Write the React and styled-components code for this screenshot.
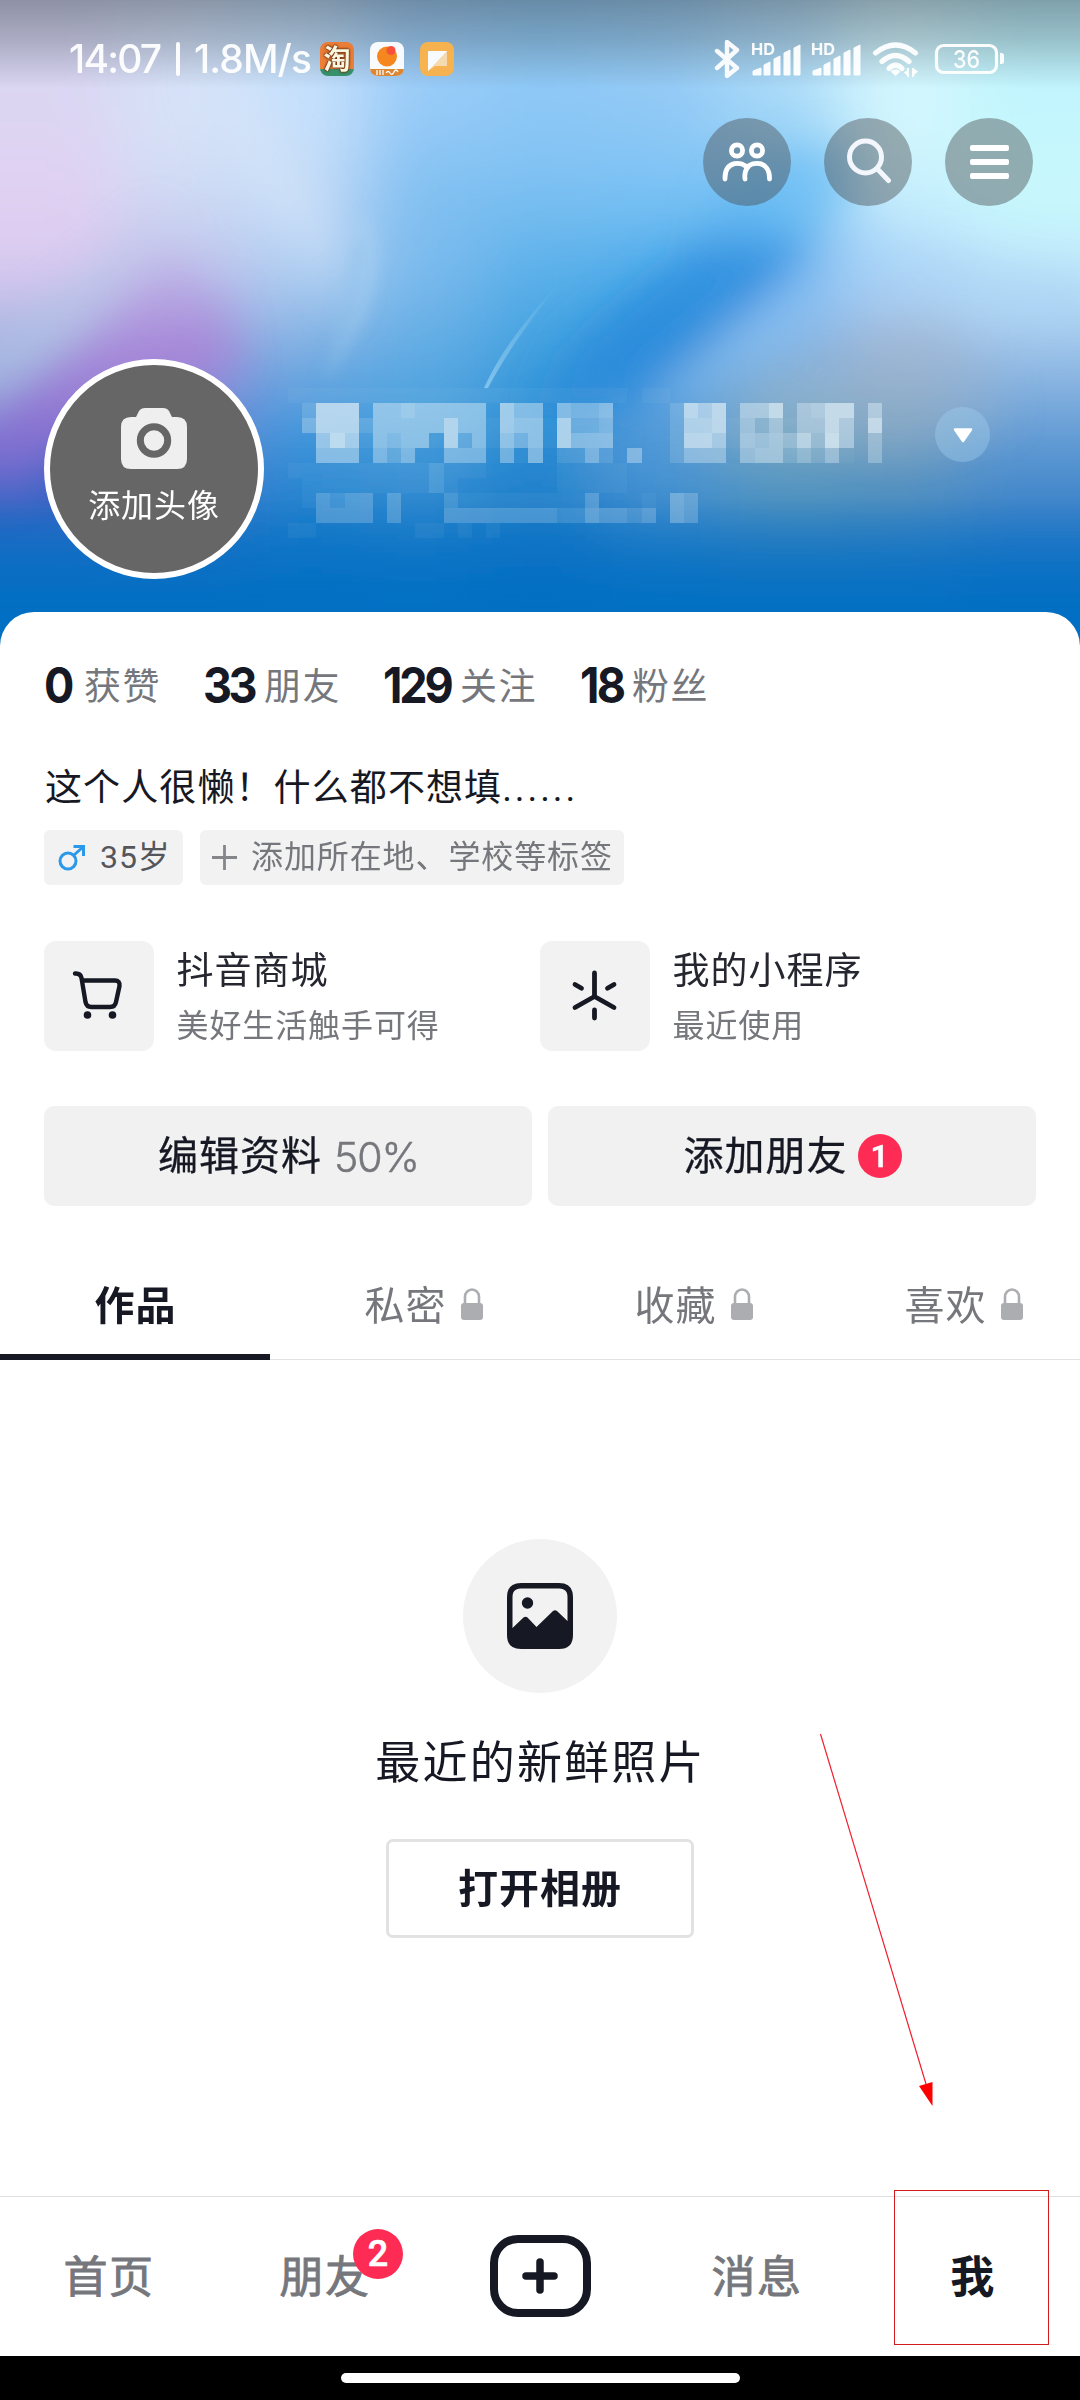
import React from "react";
import styled, { createGlobalStyle } from "styled-components";

const INK = "#161823";
const GREY = "#76777c";
const FILL = "#f2f2f2";
const RED = "#fe2c55";

const GlobalStyle = createGlobalStyle`
  * { box-sizing: border-box; }
  body {
    margin: 0;
    background: #fff;
    font-family: Roboto, "Noto Sans CJK SC", sans-serif;
    color: ${INK};
  }
  svg { display: block; flex: none; }
`;

const Screen = styled.div`
  position: relative;
  width: 1080px;
  height: 2400px;
  overflow: hidden;
  display: flex;
  flex-direction: column;
  background: #fff;
`;

/* ---------- cover ---------- */

const Cover = styled.header`
  position: relative;
  height: 612px;
  flex: none;
  display: flex;
  flex-direction: column;
`;

const Wallpaper = styled.svg`
  position: absolute;
  left: 0;
  top: 0;
`;

const StatusBar = styled.div`
  position: relative;
  height: 118px;
  padding: 40px 76px 0 69px;
  display: flex;
  justify-content: space-between;
  align-items: flex-start;
  color: #fff;
  opacity: 0.94;
`;

const StatusGroup = styled.div`
  display: flex;
  align-items: center;
  height: 38px;
`;

const Clock = styled.span`
  font: 500 39px/38px Inter, sans-serif;
  letter-spacing: ${(p) => p.$spacing}px;
  width: ${(p) => p.$width}px;
  white-space: nowrap;
`;

const Bar = styled.span`
  width: 4px;
  height: 34px;
  border-radius: 2px;
  background: #fff;
  margin: 0 14px 0 14px;
`;

const AppIcons = styled.div`
  display: flex;
  gap: 16px;
  margin-left: 8px;
`;

const TaoIcon = styled.span`
  width: 34px;
  height: 34px;
  border-radius: 8px;
  background: linear-gradient(#f0792c 0 78%, #2f8d63 78%);
  color: #fffbe0;
  font: 700 27px/32px "Noto Sans CJK SC", sans-serif;
  text-align: center;
  text-shadow: 0 0 2px #6b2a08, 0 0 2px #6b2a08, 0 0 3px #6b2a08;
`;

const Actions = styled.nav`
  position: relative;
  display: flex;
  justify-content: flex-end;
  gap: 33px;
  padding-right: 47px;
`;

const RoundButton = styled.button`
  width: 88px;
  height: 88px;
  padding: 0;
  border: 0;
  border-radius: 50%;
  background: rgba(72, 74, 76, 0.43);
  display: flex;
  align-items: center;
  justify-content: center;
`;

const Identity = styled.div`
  position: relative;
  display: flex;
  align-items: flex-start;
  padding: 0 90px 0 44px;
  margin-top: 153px;
`;

const Avatar = styled.div`
  width: 220px;
  height: 220px;
  border: 6px solid #fff;
  border-radius: 50%;
  background: #666;
  color: #fff;
  display: flex;
  flex-direction: column;
  align-items: center;
  padding-top: 43px;
  font-size: 32px;
  line-height: 44px;
  letter-spacing: 0.9px;
`;

const AvatarLabel = styled.span`
  margin-top: 15px;
`;

const HiddenName = styled.svg`
  margin: 29px 0 0 24px;
`;

const Toggle = styled.button`
  width: 55px;
  height: 55px;
  margin: 48px 0 0 auto;
  padding: 2px 0 0;
  border: 0;
  border-radius: 50%;
  background: rgba(160, 205, 235, 0.42);
  display: flex;
  align-items: center;
  justify-content: center;
`;

/* ---------- sheet ---------- */

const Sheet = styled.main`
  position: relative;
  flex: 1;
  background: #fff;
  border-radius: 34px 34px 0 0;
  display: flex;
  flex-direction: column;
`;

const Stats = styled.div`
  display: flex;
  height: 60px;
  margin: 43px 0 0 44px;
`;

const Stat = styled.div`
  display: flex;
  width: ${(p) => p.$width}px;
  color: ${GREY};
  font-size: 37px;
  line-height: 65px;
  letter-spacing: 1.4px;
  white-space: nowrap;
`;

const Count = styled.b`
  width: ${(p) => p.$width}px;
  flex: none;
  color: ${INK};
  font: 700 50px/61px Inter, sans-serif;
  letter-spacing: ${(p) => p.$spacing}px;
`;

const Narrow = styled.span`
  display: inline-block;
  transform: scaleX(0.9);
  transform-origin: left;
`;

const Bio = styled.p`
  margin: 47px 0 0 45px;
  font-size: 37px;
  line-height: 54px;
  letter-spacing: 1.1px;
`;

const Dots = styled.span`
  letter-spacing: 2.9px;
`;

const Chips = styled.div`
  display: flex;
  gap: 17px;
  margin: 14px 0 0 44px;
`;

const Chip = styled.div`
  height: 55px;
  width: ${(p) => p.$width}px;
  padding-left: ${(p) => p.$pad}px;
  border-radius: 6px;
  background: ${FILL};
  display: flex;
  align-items: center;
  gap: ${(p) => p.$gap}px;
  color: ${(p) => p.$color};
  font-size: 32px;
  line-height: 59px;
  letter-spacing: 0.9px;
  white-space: nowrap;
`;

const Shortcuts = styled.div`
  display: grid;
  grid-template-columns: 496px 496px;
  margin: 56px 0 0 44px;
`;

const Shortcut = styled.div`
  display: flex;
  gap: 22.5px;
`;

const Tile = styled.div`
  width: 110px;
  height: 110px;
  border-radius: 12px;
  background: ${FILL};
`;

const ShortcutText = styled.div`
  display: flex;
  flex-direction: column;
  padding-top: 4px;
`;

const ShortcutTitle = styled.span`
  font-size: 37px;
  line-height: 54px;
  letter-spacing: 1px;
  color: #25262f;
`;

const ShortcutNote = styled.span`
  margin-top: 2px;
  font-size: 32px;
  line-height: 50px;
  letter-spacing: 0.9px;
  color: ${GREY};
`;

const ButtonRow = styled.div`
  display: grid;
  grid-template-columns: 1fr 1fr;
  gap: 16px;
  margin: 55px 44px 0;
`;

const WideButton = styled.button`
  height: 100px;
  padding: 2px 0 0 1px;
  border: 0;
  border-radius: 10px;
  background: #f1f1f1;
  display: flex;
  align-items: center;
  justify-content: center;
  font: 400 40px/60px Roboto, "Noto Sans CJK SC", sans-serif;
  letter-spacing: 1px;
  color: ${INK};
  -webkit-text-stroke: 0.3px ${INK};
`;

const Percent = styled.span`
  margin-left: 12px;
  font-family: Inter, sans-serif;
  font-weight: 300;
  font-size: 41px;
  letter-spacing: -1px;
  color: ${GREY};
  -webkit-text-stroke: 0.5px ${GREY};
`;

const Badge = styled.span`
  width: ${(p) => p.$size}px;
  height: ${(p) => p.$size}px;
  border-radius: 50%;
  background: ${RED};
  color: #fff;
  font: 500 ${(p) => p.$font}px/${(p) => p.$size}px Roboto, sans-serif;
  letter-spacing: 0;
  text-align: center;
  -webkit-text-stroke: 0.6px #fff;
`;

const ButtonBadge = styled(Badge)`
  margin: -2px 0 0 10px;
`;

const Tabs = styled.div`
  display: grid;
  grid-template-columns: repeat(4, 270px);
  height: 101px;
  margin-top: 53px;
  border-bottom: 1px solid #e2e2e3;
`;

const Tab = styled.div`
  height: 101px;
  display: flex;
  align-items: center;
  justify-content: center;
  padding-left: 1px;
  padding-bottom: ${(p) => (p.$active ? 8 : 13)}px;
  border-bottom: ${(p) => (p.$active ? `6px solid ${INK}` : "0")};
  font-size: 40px;
  font-weight: ${(p) => (p.$active ? 700 : 400)};
  letter-spacing: 1px;
  color: ${(p) => (p.$active ? INK : GREY)};
`;

const LockIcon = styled.svg`
  margin: 3px -36px 0 14px;
`;

const Empty = styled.section`
  flex: 1;
  display: flex;
  flex-direction: column;
  align-items: center;
  padding-top: 179px;
`;

const EmptyIcon = styled.div`
  width: 154px;
  height: 154px;
  border-radius: 50%;
  background: ${FILL};
  display: flex;
  align-items: center;
  justify-content: center;
`;

const EmptyTitle = styled.h2`
  margin: 38px 0 0 1px;
  font-size: 45px;
  font-weight: 400;
  line-height: 66px;
  letter-spacing: 2.2px;
`;

const OutlineButton = styled.button`
  margin-top: 42px;
  width: 308px;
  height: 99px;
  padding: 0 0 5px;
  border: 3px solid #e2e2e3;
  border-radius: 7px;
  background: #fff;
  color: ${INK};
  font: 700 40px/60px "Noto Sans CJK SC", sans-serif;
  letter-spacing: 1px;
`;

/* ---------- bottom ---------- */

const NavBar = styled.nav`
  height: 160px;
  flex: none;
  border-top: 1px solid #dedfe0;
  display: grid;
  grid-template-columns: repeat(5, 216px);
`;

const NavItem = styled.div`
  position: relative;
  display: flex;
  align-items: center;
  justify-content: center;
  padding: 0 0 6px 2px;
  font-size: 44px;
  font-weight: ${(p) => (p.$active ? 700 : 400)};
  letter-spacing: 1.6px;
  color: ${(p) => (p.$active ? INK : GREY)};
  -webkit-text-stroke: ${(p) => (p.$active ? 0 : 0.9)}px ${GREY};
`;

const NavBadge = styled(Badge)`
  position: absolute;
  left: 137px;
  top: 32px;
`;

const CreateButton = styled.div`
  width: 101px;
  height: 82px;
  margin: 5px 2px 0 0;
  border: 8px solid ${INK};
  border-radius: 28px;
  display: flex;
  align-items: center;
  justify-content: center;
`;

const GestureBar = styled.div`
  height: 44px;
  flex: none;
  background: #000;
  display: flex;
  justify-content: center;
  padding-top: 17px;
`;

const GesturePill = styled.div`
  width: 399px;
  height: 10px;
  border-radius: 5px;
  background: #fff;
`;

const Highlight = styled.div`
  position: absolute;
  left: 894px;
  top: 2190px;
  width: 155px;
  height: 155px;
  border: 1px solid #d01c1c;
`;

const Pointer = styled.svg`
  position: absolute;
  left: 800px;
  top: 1720px;
`;

/* ---------- drawings ---------- */

const MESH = [
  ["#d8d6f2", "#d4e0f8", "#c3e0fc", "#9ccdf8", "#90cbf6", "#98cdf5", "#b0dcf8", "#d2f5fe", "#bdf3fd"],
  ["#dcd6f3", "#d8e3f8", "#c9e2fc", "#97cbf8", "#8cc7f6", "#90c8f5", "#a4d8f8", "#d6f8fe", "#c3f5fd"],
  ["#e1d0f2", "#d0dcf4", "#c4dcf7", "#80c0f1", "#7cc0f2", "#7ac3f5", "#76c2f5", "#c8effd", "#c8f9fd"],
  ["#dacbf1", "#c2c4ec", "#b4d2f3", "#7dbbee", "#5ab1ea", "#4fadeb", "#45a4eb", "#b2dcfb", "#c4ebfc"],
  ["#a6b3e0", "#a594da", "#80b0e2", "#62ade4", "#42a2e0", "#3597de", "#80b5ea", "#a3b8dc", "#a0c4ea"],
  ["#6f6bcd", "#7284d2", "#429ade", "#4aa0de", "#2b8fd6", "#5a9fdc", "#82acc4", "#84a8c2", "#6ba2d8"],
  ["#3464c4", "#3a74c8", "#2484d0", "#2e8ad0", "#1c80cb", "#3f90d0", "#4b94c0", "#488fc0", "#3f87ca"],
  ["#0b6fc3", "#0b6fc3", "#0b72c4", "#0e74c5", "#0a70c3", "#0f75c3", "#1275c0", "#1275c2", "#0b70c4"],
];

function CoverArt() {
  return (
    <Wallpaper width="1080" height="660" viewBox="0 0 1080 660">
      <defs>
        <filter id="mesh" filterUnits="userSpaceOnUse" x="-200" y="-200" width="1480" height="1060">
          <feGaussianBlur stdDeviation="38" />
        </filter>
        <filter id="soft" filterUnits="userSpaceOnUse" x="-200" y="-100" width="1480" height="900">
          <feGaussianBlur stdDeviation="20" />
        </filter>
        <filter id="fine" filterUnits="userSpaceOnUse" x="-100" y="0" width="1300" height="700">
          <feGaussianBlur stdDeviation="7" />
        </filter>
        <linearGradient id="shade" x1="0" y1="0" x2="0" y2="1">
          <stop offset="0" stopColor="#37414b" stopOpacity=".46" />
          <stop offset=".45" stopColor="#37414b" stopOpacity=".28" />
          <stop offset="1" stopColor="#37414b" stopOpacity="0" />
        </linearGradient>
        <linearGradient id="floor" x1="0" y1="0" x2="0" y2="1">
          <stop offset="0" stopColor="#006fc3" stopOpacity="0" />
          <stop offset=".75" stopColor="#006fc3" stopOpacity=".9" />
          <stop offset="1" stopColor="#006fc3" />
        </linearGradient>
        <linearGradient id="violet" x1="0" y1="0" x2="0" y2="1">
          <stop offset="0" stopColor="#b89ae2" stopOpacity=".15" />
          <stop offset=".5" stopColor="#aa78d6" stopOpacity=".65" />
          <stop offset="1" stopColor="#8c72d4" stopOpacity=".5" />
        </linearGradient>
        <linearGradient id="ray" x1="0" y1="0" x2="0" y2="1">
          <stop offset="0" stopColor="#a9dcf5" stopOpacity="0" />
          <stop offset="1" stopColor="#a9dcf5" stopOpacity=".6" />
        </linearGradient>
      </defs>
      <g filter="url(#mesh)">
        {MESH.map((row, r) =>
          row.map((color, c) => (
            <rect
              key={`${r}-${c}`}
              x={c === 0 ? -160 : c * 120}
              y={r === 0 ? -160 : r * 76}
              width={c === 0 || c === 8 ? 282 : 122}
              height={r === 0 ? 238 : r === 7 ? 260 : 78}
              fill={color}
            />
          ))
        )}
      </g>
      <g filter="url(#soft)">
        <path d="M-40 440L50 370L110 310L165 245L225 300L240 370L120 400L0 500Z" fill="url(#violet)" />
        <path d="M-40 350L60 300L120 250L165 205L110 300L40 370L-40 430Z" fill="#b0c6e6" opacity=".6" />
        <path d="M200 60Q290 130 335 235L345 330Q330 260 290 230Q220 170 200 60Z" fill="#d8e6fa" opacity=".5" />
        <path d="M735 215L800 245L755 315L655 400L540 420L570 350L640 290Z" fill="#1a84d8" opacity=".6" />
        <path d="M735 170L840 140L850 200L770 245L700 240Z" fill="#67bdf3" opacity=".6" />
        <path d="M640 400Q740 310 860 235L1090 270L1090 330L960 310Q820 300 700 400Z" fill="#a6cff7" opacity=".4" />
        <path d="M730 420Q800 330 900 310Q990 330 1010 420L900 450Z" fill="#9fb4c8" opacity=".25" />
      </g>
      <g filter="url(#fine)">
        <path d="M366 210Q410 280 320 385Q345 300 345 240Z" fill="#b5d6f5" opacity=".28" />
        <path d="M358 240Q350 320 318 388" fill="none" stroke="#3d92d5" strokeWidth="5" opacity=".25" />
      </g>
      <path d="M484 388Q505 340 562 280Q512 342 488 388Z" fill="url(#ray)" />
      <rect y="500" width="1080" height="160" fill="url(#floor)" />
      <rect width="1080" height="88" fill="url(#shade)" />
    </Wallpaper>
  );
}

/* One character per block, hex value = brightness; spaces only separate glyphs. */
const BLOCKS = [
  "11111111111111 1 1111111110 11000000000000000",
  "029990 66766666 0 866 0 6556 0000 2 979 0 669 0 5699 060",
  "049992 66666966 1 877 1 9445 0000 2 889 1 525 1 5596 090",
  "007a81 65661936 1 757 1 9666 0000 2 997 1 656 4 84a6 040",
  "006660 53500555 0 516 0 2252 0500 2 555 0 566 2 4251 040",
  "111111 11112111 0 000 0 1111 1000 0 000 0 000 0 0000 000",
  "011111 11112100 0 000 0 1111 1000 0 000 0 000 0 0000 000",
  "013233 03000211 1 111 1 1130 0010 4 300 0 000 0 0000 000",
  "003333 03000333 3 333 3 2243 3230 4 300 0 000 0 0000 000",
  "110000 00011010 1 000 0 0000 0000 0 000 0 000 0 0000 000",
].map((row) => row.replace(/ /g, "").split(""));

function Mosaic() {
  return (
    <HiddenName width="608" height="150" viewBox="0 0 608 150" shapeRendering="crispEdges">
      {BLOCKS.map((row, r) =>
        row.map((v, c) =>
          v === "0" ? null : (
            <rect
              key={`${r}-${c}`}
              x={c * 14.14}
              y={r * 15}
              width="14.14"
              height="15"
              fill="#dcecf4"
              opacity={v === "1" ? 0.05 : parseInt(v, 16) * 0.08}
            />
          )
        )
      )}
    </HiddenName>
  );
}

function StatusIcons() {
  const bars = [
    [2, 28, 8],
    [13, 22, 6],
    [23, 16, 6],
    [33, 10, 6],
    [43, 5, 6],
  ];
  return (
    <svg width="290" height="38" viewBox="0 0 290 38" fill="#fff">
      <path d="M3 11L23 28L13 36V2L23 10L3 28" fill="none" stroke="#fff" strokeWidth="4.4" strokeLinejoin="round" strokeLinecap="round" />
      {[37, 97].map((x) => (
        <g key={x} transform={`translate(${x} 0)`}>
          <text x="0" y="15" fontFamily="Inter, sans-serif" fontWeight="700" fontSize="16.5" textLength="24" lengthAdjust="spacingAndGlyphs">HD</text>
          {bars.map(([bx, y, w]) => (
            <path key={bx} d={`M${bx} 35V${y + 3}L${bx + w} ${y}V35Z`} strokeLinejoin="round" stroke="#fff" strokeWidth="1" />
          ))}
        </g>
      ))}
      <g fill="none" stroke="#fff" strokeWidth="5.2" strokeLinecap="round">
        <path d="M161.500 13Q181.500 -3 201.500 13" />
        <path d="M168 21.500Q181.500 9.500 195 21.500" />
        <path d="M175 28.500Q181.500 22 188 28.500" />
      </g>
      <path d="M176.500 31.500Q181.500 27 186.500 31.500L181.500 36Z" />
      <path d="M190 32.500L194.500 29V37ZM204 31.500L199 28V36Z" />
      <path d="M194 28V37M199 28V37" stroke="#fff" strokeWidth="2" />
      <rect x="222.500" y="5.500" width="60" height="27" rx="7" fill="none" stroke="#fff" strokeWidth="3.200" />
      <path d="M286 13h1.500q2.500 0 2.500 2.500v6q0 2.500-2.500 2.500h-1.500z" />
      <text x="252.500" y="28" textAnchor="middle" fontFamily="Inter, sans-serif" fontWeight="500" fontSize="24" textLength="27" lengthAdjust="spacingAndGlyphs">36</text>
    </svg>
  );
}

function Lock() {
  return (
    <LockIcon width="22" height="33" viewBox="0 0 22 33">
      <path d="M4 17V9a7 7.500 0 0 1 14 0V17" fill="none" stroke="#acadb1" strokeWidth="2.600" />
      <rect y="15" width="22" height="17" rx="3" fill="#acadb1" />
    </LockIcon>
  );
}

const STATS = [
  { count: "0", label: "获赞", width: 159, num: 40, spacing: 0 },
  { count: "33", label: "朋友", width: 180, num: 61, spacing: -4 },
  { count: "129", label: "关注", width: 197, num: 77, spacing: -3.5 },
  { count: "18", label: "粉丝", width: 140, num: 52, spacing: -3 },
];

export default function App() {
  return (
    <Screen>
      <GlobalStyle />
      <Cover>
        <CoverArt />
        <StatusBar>
          <StatusGroup>
            <Clock $width={93} $spacing={-1.8}>14:07</Clock>
            <Bar />
            <Clock $width={118} $spacing={-0.9}>1.8M/s</Clock>
            <AppIcons>
              <TaoIcon>淘</TaoIcon>
              <svg width="34" height="34" viewBox="0 0 34 34">
                <rect width="34" height="34" rx="8" fill="#fff" />
                <path d="M0 27H34Q33 34 26 34H8Q1 34 0 27Z" fill="#e08327" />
                <circle cx="17" cy="14.500" r="10" fill="#fb8412" />
                <circle cx="21" cy="8.500" r="4.500" fill="#ff4b31" />
                <path d="M7 28V33M10 28V33M13 28V33M16 31q2-3 4 0t4-1t4 0" fill="none" stroke="#fff" strokeWidth="1.300" />
              </svg>
              <svg width="34" height="34" viewBox="0 0 34 34">
                <rect width="34" height="34" rx="8" fill="#fdb246" />
                <path d="M8 9H27V24H15L8 29Z" fill="#fddcac" />
                <path d="M8 9H27L8 29Z" fill="#fff" />
              </svg>
            </AppIcons>
          </StatusGroup>
          <StatusIcons />
        </StatusBar>
        <Actions>
          <RoundButton aria-label="朋友">
            <svg width="52" height="44" viewBox="0 0 52 44" fill="none" stroke="#fff" strokeWidth="4.800" strokeLinecap="round">
              <circle cx="16" cy="10.500" r="5.600" />
              <circle cx="36" cy="10.500" r="5.600" />
              <path d="M4 39V38C4 20 22 21 26 28C30 21 48.500 20 48.500 38V39M24 39Q23 31 27.500 26.500" />
            </svg>
          </RoundButton>
          <RoundButton aria-label="搜索">
            <svg width="48" height="48" viewBox="0 0 48 48" fill="none" stroke="#f3f6fc" strokeWidth="5" strokeLinecap="round">
              <circle cx="21.500" cy="19" r="16" />
              <path d="M33.500 31L44.500 42.500" />
            </svg>
          </RoundButton>
          <RoundButton aria-label="菜单">
            <svg width="40" height="36" viewBox="0 0 40 36" fill="#fff">
              <rect x="1" y="1" width="39" height="6" rx="2" />
              <rect x="1" y="15" width="39" height="6" rx="2" />
              <rect x="1" y="29" width="39" height="6" rx="2" />
            </svg>
          </RoundButton>
        </Actions>
        <Identity>
          <Avatar>
            <svg width="66" height="61" viewBox="0 0 66 61">
              <path d="M15 9L18 3Q20 0 24 0H42Q46 0 48 3L51 9H56Q66 9 66 19V51Q66 61 56 61H10Q0 61 0 51V19Q0 9 10 9Z" fill="#efefef" />
              <circle cx="33" cy="32.500" r="13.700" fill="none" stroke="#666" strokeWidth="7" />
            </svg>
            <AvatarLabel>添加头像</AvatarLabel>
          </Avatar>
          <Mosaic />
          <Toggle aria-label="展开">
            <svg width="20" height="15" viewBox="0 0 20 15">
              <path d="M2 1.500H18L10 13Z" fill="#fff" stroke="#fff" strokeWidth="2.500" strokeLinejoin="round" />
            </svg>
          </Toggle>
        </Identity>
      </Cover>

      <Sheet>
        <Stats>
          {STATS.map((s) => (
            <Stat key={s.label} $width={s.width}>
              <Count $width={s.num} $spacing={s.spacing}>
                <Narrow>{s.count}</Narrow>
              </Count>
              {s.label}
            </Stat>
          ))}
        </Stats>
        <Bio>
          这个人很懒！什么都不想填<Dots>......</Dots>
        </Bio>
        <Chips>
          <Chip $width={139} $pad={14} $gap={14} $color="#55565c">
            <svg width="28" height="28" viewBox="0 0 28 28" fill="none" stroke="#2b98ea" strokeWidth="3">
              <circle cx="10" cy="17" r="8" />
              <path d="M16 11L25 3M15.500 2.500H25.500V12" />
            </svg>
            35岁
          </Chip>
          <Chip $width={424} $pad={12} $gap={14} $color={GREY}>
            <svg width="25" height="25" viewBox="0 0 25 25" stroke="#85868b" strokeWidth="2.800">
              <path d="M12.500 0V25M0 12.500H25" />
            </svg>
            添加所在地、学校等标签
          </Chip>
        </Chips>
        <Shortcuts>
          <Shortcut>
            <Tile>
              <svg width="110" height="110" viewBox="0 0 110 110" fill="none" stroke={INK} strokeWidth="4.400" strokeLinecap="round" strokeLinejoin="round">
                <path d="M31 32.500Q36.500 32 37.500 37L41.500 61Q42.500 66 47.500 66H66Q71 66 72 61L75.500 45Q76 39.500 71 39.500H39" />
                <circle cx="43.500" cy="74" r="3.800" fill={INK} stroke="none" />
                <circle cx="68.500" cy="74" r="3.800" fill={INK} stroke="none" />
              </svg>
            </Tile>
            <ShortcutText>
              <ShortcutTitle>抖音商城</ShortcutTitle>
              <ShortcutNote>美好生活触手可得</ShortcutNote>
            </ShortcutText>
          </Shortcut>
          <Shortcut>
            <Tile>
              <svg width="110" height="110" viewBox="0 0 110 110" fill="none" stroke={INK} strokeWidth="4.800" strokeLinecap="round" strokeLinejoin="round">
                <path d="M54.500 32V55.500L35 66.500M54.500 55.500L74 66.500M35 43.500L41.500 47.300M74 43.500L67.500 47.300M54.500 69V77" />
              </svg>
            </Tile>
            <ShortcutText>
              <ShortcutTitle>我的小程序</ShortcutTitle>
              <ShortcutNote>最近使用</ShortcutNote>
            </ShortcutText>
          </Shortcut>
        </Shortcuts>
        <ButtonRow>
          <WideButton>
            编辑资料<Percent>50%</Percent>
          </WideButton>
          <WideButton>
            添加朋友<ButtonBadge $size={44} $font={32}>1</ButtonBadge>
          </WideButton>
        </ButtonRow>
        <Tabs>
          <Tab $active>作品</Tab>
          {["私密", "收藏", "喜欢"].map((t) => (
            <Tab key={t}>
              {t}
              <Lock />
            </Tab>
          ))}
        </Tabs>
        <Empty>
          <EmptyIcon>
            <svg width="66" height="66" viewBox="0 0 66 66" fill={INK}>
              <path fillRule="evenodd" d="M14 0H52Q66 0 66 14V52Q66 66 52 66H14Q0 66 0 52V14Q0 0 14 0ZM14 5.500Q5.500 5.500 5.500 14V45L16.500 34.500Q18.500 33 20.500 34.500L29.500 44L46 28Q48 26.500 50 28L60.500 38V14Q60.500 5.500 52 5.500Z" />
              <circle cx="20.500" cy="20" r="5.700" />
            </svg>
          </EmptyIcon>
          <EmptyTitle>最近的新鲜照片</EmptyTitle>
          <OutlineButton>打开相册</OutlineButton>
        </Empty>
      </Sheet>

      <NavBar>
        <NavItem>首页</NavItem>
        <NavItem>
          朋友<NavBadge $size={50} $font={36}>2</NavBadge>
        </NavItem>
        <NavItem>
          <CreateButton>
            <svg width="36" height="36" viewBox="0 0 36 36" stroke={INK} strokeWidth="7.500" strokeLinecap="round">
              <path d="M18 4V32M4 18H32" />
            </svg>
          </CreateButton>
        </NavItem>
        <NavItem>消息</NavItem>
        <NavItem $active>我</NavItem>
      </NavBar>
      <GestureBar>
        <GesturePill />
      </GestureBar>

      <Pointer width="150" height="400" viewBox="0 0 150 400">
        <path d="M20.500 14L126 364" stroke="#f02030" strokeWidth="1.200" />
        <path d="M119 366L132.500 362V386Z" fill="#f00" />
      </Pointer>
      <Highlight />
    </Screen>
  );
}
